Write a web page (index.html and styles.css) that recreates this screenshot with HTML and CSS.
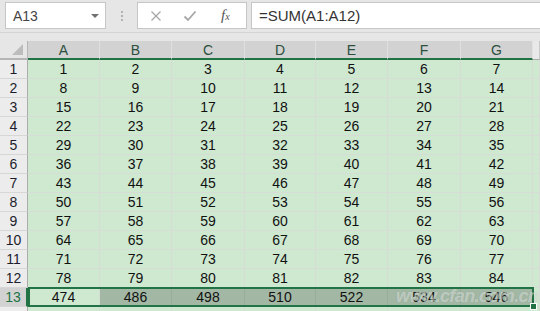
FILE: index.html
```html
<!DOCTYPE html>
<html lang="en">
<head>
  <meta charset="UTF-8">
  <title>SUM</title>
  <link rel="stylesheet" href="styles.css">
</head>
<body>

  <div class="formula-bar">
    <div class="name-box">
      <span>A13</span>
      <span class="name-arrow"></span>
    </div>
    <div class="grip"><i></i><i></i><i></i></div>
    <div class="fx-buttons">
      <svg class="fx-icon" width="12" height="12" viewBox="0 0 12 12"><path d="M1.5 1.5 L10.5 10.5 M10.5 1.5 L1.5 10.5" stroke="#a6a6a6" stroke-width="1.3" fill="none"/></svg>
      <svg class="fx-icon" width="14" height="12" viewBox="0 0 14 12"><path d="M1.5 6.5 L5 10 L12.5 1.5" stroke="#a6a6a6" stroke-width="1.8" fill="none"/></svg>
      <span class="fx-label">f<small>x</small></span>
    </div>
    <div class="formula-input">=SUM(A1:A12)</div>
  </div>

  <div class="sheet" id="sheet">
    <div class="corner"><span class="corner-mark"></span></div>
    <div class="col-head sel">A</div>
    <div class="col-head sel">B</div>
    <div class="col-head sel">C</div>
    <div class="col-head sel">D</div>
    <div class="col-head sel">E</div>
    <div class="col-head sel">F</div>
    <div class="col-head sel">G</div>
    <div class="col-head"></div>

    <div class="selection"><span class="fill-handle"></span></div>
    <div class="watermark">www.cfan.com.cn</div>
  </div>

  <script>
    const sheet = document.getElementById('sheet');
    const selection = sheet.querySelector('.selection');

    function addCell(cls, text) {
      const cell = document.createElement('div');
      cell.className = cls;
      cell.textContent = text;
      sheet.insertBefore(cell, selection);
    }

    for (let r = 1; r <= 14; r++) {
      addCell(r === 13 ? 'row-head sel' : 'row-head', r === 14 ? '' : r);
      for (let c = 0; c < 8; c++) {
        let text = '';
        if (c < 7 && r <= 12) {
          text = (r - 1) * 7 + c + 1;
        } else if (c < 7 && r === 13) {
          text = 474 + c * 12;
        }
        let cls = 'cell';
        if (r === 13 && c > 0 && c < 7) cls += ' picked';
        addCell(cls, text);
      }
    }
  </script>

</body>
</html>
```

FILE: styles.css
```css
* {
  margin: 0;
  padding: 0;
  box-sizing: border-box;
}

body {
  font-family: 'Liberation Sans', Arial, sans-serif;
  background-color: #e6e6e6;
  color: #111;
  overflow: hidden;
}

.formula-bar {
  display: flex;
  align-items: center;
  height: 33px;
  padding: 0 0 1px 5px;
  border-bottom: 1px solid #d4d4d4;
}

.name-box {
  display: flex;
  align-items: center;
  justify-content: space-between;
  width: 101px;
  height: 27px;
  padding: 0 6px 0 7px;
  background-color: #fff;
  border: 1px solid #c6c6c6;
  font-size: 14px;
  color: #444;
}

.name-arrow {
  width: 0;
  height: 0;
  border-left: 4px solid transparent;
  border-right: 4px solid transparent;
  border-top: 4px solid #707070;
}

.grip {
  display: flex;
  flex-direction: column;
  gap: 2px;
  width: 31px;
  align-items: center;
}

.grip i {
  display: block;
  width: 2px;
  height: 2px;
  background-color: #b3b3b3;
}

.fx-buttons {
  display: flex;
  align-items: center;
  width: 110px;
  height: 27px;
  padding-left: 12px;
  gap: 21px;
  background-color: #fff;
  border: 1px solid #c6c6c6;
}

.fx-label {
  font-family: 'Liberation Serif', serif;
  font-style: italic;
  font-size: 15px;
  color: #555;
  margin-left: 3px;
}

.fx-label small {
  font-size: 10px;
}

.formula-input {
  flex: 1;
  height: 27px;
  margin-left: 4px;
  padding: 4px 0 0 7px;
  background-color: #fff;
  border: 1px solid #c6c6c6;
  border-right: none;
  font-size: 15px;
  color: #333;
}

.sheet {
  position: relative;
  display: grid;
  grid-template-columns: 28px 72px 72px 73px 71px 72px 73px 72px 1fr;
  grid-auto-rows: 19px;
  margin-top: 8px;
  font-size: 14px;
}

.corner {
  position: relative;
  background-color: #e6e6e6;
  border-right: 1px solid #b5b5b5;
  border-bottom: 2px solid #b5b5b5;
}

.corner-mark {
  position: absolute;
  right: 4px;
  bottom: 3px;
  width: 0;
  height: 0;
  border-left: 11px solid transparent;
  border-bottom: 11px solid #bcbcbc;
}

.col-head {
  display: flex;
  align-items: center;
  justify-content: center;
  background-color: #e9e9e9;
  border-right: 1px solid #c8c8c8;
  border-bottom: 1px solid #ababab;
  color: #444;
  font-size: 14px;
}

.col-head.sel {
  background-color: #d2d2d2;
  border-right-color: #e0e0e0;
  border-bottom: 2px solid #217346;
  color: #2b4f3c;
}

.row-head {
  display: flex;
  align-items: center;
  justify-content: center;
  background-color: #ececec;
  border-right: 1px solid #ababab;
  border-bottom: 1px solid #d6d6d6;
  color: #1c1c2c;
  font-size: 14px;
}

.row-head.sel {
  background-color: #d2d2d2;
  border-right: 2px solid #217346;
  color: #217346;
}

.cell {
  display: flex;
  align-items: center;
  justify-content: center;
  background-color: #cfe8d0;
  border-right: 1px solid #d6dcd6;
  border-bottom: 1px solid #d6dcd6;
  color: #111;
}

.cell.picked {
  background-color: #a2b7a4;
  border-right-color: #98ad9a;
}

.selection {
  position: absolute;
  left: 28px;
  top: 246px;
  width: 506px;
  height: 20px;
  border: 2px solid #217346;
  pointer-events: none;
}

.fill-handle {
  position: absolute;
  right: -5px;
  bottom: -5px;
  width: 7px;
  height: 7px;
  background-color: #217346;
  border: 1px solid #fff;
}

.watermark {
  position: absolute;
  left: 396px;
  top: 245px;
  font-size: 18px;
  font-weight: bold;
  font-style: italic;
  letter-spacing: -0.6px;
  color: rgba(255, 255, 255, 0.4);
  text-shadow: 0 0 1px rgba(120, 140, 125, 0.35);
  pointer-events: none;
}
```
